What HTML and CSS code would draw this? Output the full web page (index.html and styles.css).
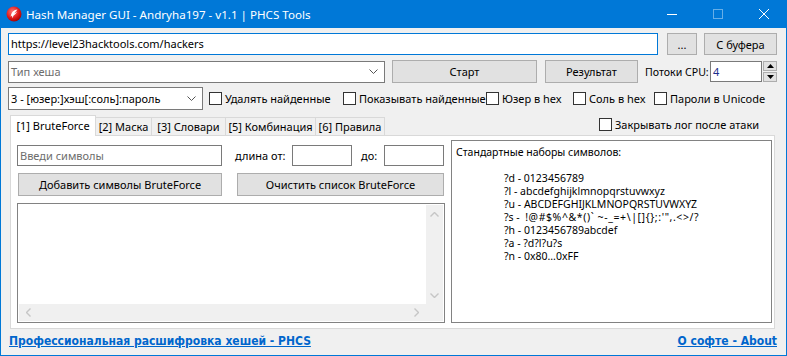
FILE: index.html
```html
<!DOCTYPE html>
<html lang="ru">
<head>
  <meta charset="UTF-8" />
  <title>Hash Manager GUI</title>
  <link rel="stylesheet" href="styles.css">
</head>
<body>
  <div class="window">
    <div class="titlebar">
      <svg class="app-icon" width="16" height="16" viewBox="0 0 16 16">
        <defs>
          <radialGradient id="rg" cx="0.4" cy="0.35" r="0.7">
            <stop offset="0" stop-color="#ff7a7a"/>
            <stop offset="0.6" stop-color="#e01b1b"/>
            <stop offset="1" stop-color="#9c0000"/>
          </radialGradient>
        </defs>
        <circle cx="8" cy="8" r="7.5" fill="url(#rg)"/>
        <path d="M11.5 3.5 C8 3.8 5.2 6.2 4.6 10.8 L6 9.6 L6.4 12.2 L7.6 9.4 C9 8.8 10.6 7.4 11 5.6 C10.2 6.6 9.2 7.2 8.2 7.4 C9.2 6.2 10.4 4.8 11.5 3.5 Z" fill="#fff"/>
      </svg>
      <span class="title">Hash Manager GUI - Andryha197 - v1.1 | PHCS Tools</span>
      <div class="caption-btns">
        <span class="cap"><svg width="10" height="10" viewBox="0 0 10 10"><path d="M0 5.5H10" stroke="#fff" stroke-width="1"/></svg></span>
        <span class="cap"><svg width="10" height="10" viewBox="0 0 10 10"><rect x="0.5" y="0.5" width="9" height="9" fill="none" stroke="rgba(255,255,255,0.4)"/></svg></span>
        <span class="cap"><svg width="10" height="10" viewBox="0 0 10 10"><path d="M0 0L10 10M10 0L0 10" stroke="#fff" stroke-width="1"/></svg></span>
      </div>
    </div>

    <div class="client">
      <div class="row row-url">
        <div class="field url">https://level23hacktools.com/hackers</div>
        <div class="btn btn-dots">...</div>
        <div class="btn btn-clip">С буфера</div>
      </div>

      <div class="row row-start">
        <div class="combo combo-hash">
          <span class="placeholder">Тип хеша</span>
          <svg class="chev" width="9" height="5" viewBox="0 0 9 5"><path d="M0.5 0.5L4.5 4.5L8.5 0.5" fill="none" stroke="#555"/></svg>
        </div>
        <div class="btn btn-start">Старт</div>
        <div class="btn btn-result">Результат</div>
        <span class="cpu-label">Потоки CPU:</span>
        <div class="field cpu">4</div>
        <div class="spin">
          <span class="spin-btn"><svg width="7" height="4" viewBox="0 0 7 4"><path d="M0 4L3.5 0L7 4Z" fill="#000"/></svg></span>
          <span class="spin-btn"><svg width="7" height="4" viewBox="0 0 7 4"><path d="M0 0L3.5 4L7 0Z" fill="#000"/></svg></span>
        </div>
      </div>

      <div class="row row-opts">
        <div class="combo combo-format">
          <span>3 - [юзер:]хэш[:соль]:пароль</span>
          <svg class="chev" width="9" height="5" viewBox="0 0 9 5"><path d="M0.5 0.5L4.5 4.5L8.5 0.5" fill="none" stroke="#555"/></svg>
        </div>
        <label class="check w1"><span class="box"></span>Удалять найденные</label>
        <label class="check w2"><span class="box"></span>Показывать найденные</label>
        <label class="check w3"><span class="box"></span>Юзер в hex</label>
        <label class="check w4"><span class="box"></span>Соль в hex</label>
        <label class="check"><span class="box"></span>Пароли в Unicode</label>
      </div>

      <div class="row row-tabs">
        <div class="tabs">
          <span class="tab active t1">[1] BruteForce</span>
          <span class="tab t2">[2] Маска</span>
          <span class="tab t3">[3] Словари</span>
          <span class="tab t4">[5] Комбинация</span>
          <span class="tab t5">[6] Правила</span>
        </div>
        <label class="check close-log"><span class="box"></span>Закрывать лог после атаки</label>
      </div>

      <div class="tab-page">
        <div class="brute">
          <div class="brute-row">
            <div class="field chars"><span class="placeholder">Введи символы</span></div>
            <span class="len-label">длина от:</span>
            <div class="field len"></div>
            <span class="to-label">до:</span>
            <div class="field len"></div>
          </div>
          <div class="brute-row buttons">
            <div class="btn btn-add">Добавить символы BruteForce</div>
            <div class="btn btn-clear">Очистить список BruteForce</div>
          </div>
          <div class="log">
            <div class="log-text"></div>
            <div class="vscroll">
              <svg width="9" height="5" viewBox="0 0 9 5"><path d="M0.5 4.5L4.5 0.5L8.5 4.5" fill="none" stroke="#c6c6c6" stroke-width="1.4"/></svg>
              <svg width="9" height="5" viewBox="0 0 9 5"><path d="M0.5 0.5L4.5 4.5L8.5 0.5" fill="none" stroke="#c6c6c6" stroke-width="1.4"/></svg>
            </div>
            <div class="hscroll">
              <svg width="5" height="9" viewBox="0 0 5 9"><path d="M4.5 0.5L0.5 4.5L4.5 8.5" fill="none" stroke="#c6c6c6" stroke-width="1.4"/></svg>
              <svg width="5" height="9" viewBox="0 0 5 9"><path d="M0.5 0.5L4.5 4.5L0.5 8.5" fill="none" stroke="#c6c6c6" stroke-width="1.4"/></svg>
            </div>
            <div class="corner"></div>
          </div>
        </div>

        <div class="charsets">
          <p>Стандартные наборы символов:</p>
          <ul>
            <li>?d - 0123456789</li>
            <li>?l - abcdefghijklmnopqrstuvwxyz</li>
            <li>?u - ABCDEFGHIJKLMNOPQRSTUVWXYZ</li>
            <li>?s - &nbsp;<span class="sym">!@#$%^&amp;*()` ~-_=+\|[]{};:'",.&lt;&gt;/?</span></li>
            <li>?h - 0123456789abcdef</li>
            <li>?a - ?d?l?u?s</li>
            <li>?n - 0x80...0xFF</li>
          </ul>
        </div>
      </div>

      <div class="row row-links">
        <a href="#">Профессиональная расшифровка хешей - PHCS</a>
        <a href="#">О софте - About</a>
      </div>
    </div>
  </div>
</body>
</html>
```

FILE: styles.css
```css
* { box-sizing:border-box; margin:0; padding:0; }
html, body { width:787px; height:356px; overflow:hidden; }
body { font-family:"Noto Sans", "Segoe UI", sans-serif; font-size:11px; color:#000; background:#fff; }

.window { width:787px; height:356px; display:flex; flex-direction:column; background:#f0f0f0; }

/* —— title bar —— */
.titlebar { height:28px; background:#0078d7; color:#fff; display:flex; align-items:center; }
.app-icon { margin-left:6px; flex:none; }
.title { margin-left:4px; font-size:11.6px; white-space:nowrap; }
.caption-btns { margin-left:auto; display:flex; height:100%; }
.cap { width:46px; height:100%; display:flex; align-items:center; justify-content:center; }

/* —— client area —— */
.client { flex:1; border:1px solid #0078d7; border-top:none; padding:0 9px 0 7px; display:flex; flex-direction:column; }
.row { display:flex; align-items:center; flex:none; }

.field { background:#fff; border:1px solid #7a7a7a; height:21px; line-height:19px; padding-left:2px; white-space:nowrap; overflow:hidden; }
.placeholder { color:#6d6d6d; }
.btn { background:#e1e1e1; border:1px solid #adadad; height:23px; display:flex; align-items:center; justify-content:center; white-space:nowrap; flex:none; }
.combo { background:#fff; border:1px solid #7a7a7a; display:flex; align-items:center; padding:0 6px 0 2px; white-space:nowrap; flex:none; }
.combo .chev { margin-left:auto; }

.row-url { margin-top:5px; height:22px; }
.url { width:650px; height:22px; line-height:20px; border-color:#0078d7; }
.btn-dots { width:30px; height:22px; margin-left:9px; }
.btn-clip { width:73px; height:22px; margin-left:7px; }

.row-start { margin-top:5px; height:23px; }
.combo-hash { width:377px; height:22px; }
.btn-start { width:145px; margin-left:7px; }
.btn-result { width:93px; margin-left:8px; }
.cpu-label { width:65px; margin-left:7px; white-space:nowrap; font-size:10.6px; }
.cpu { width:52px; color:#1c2e8c; }
.spin { width:14px; height:21px; margin-left:1px; display:flex; flex-direction:column; gap:1px; }
.spin-btn { flex:1; background:#e1e1e1; border:1px solid #adadad; display:flex; align-items:center; justify-content:center; }

.row-opts { margin-top:4px; height:23px; }
.combo-format { width:195px; height:23px; }
.check { display:flex; align-items:center; white-space:nowrap; flex:none; }
.check .box { width:13px; height:13px; border:1px solid #333; background:#fff; margin-right:3px; flex:none; }
.row-opts .w1 { margin-left:6px; width:134px; }
.row-opts .w2 { width:143px; }
.row-opts .w3 { width:87px; }
.row-opts .w4 { width:81px; }

/* —— tabs —— */
.row-tabs { margin-top:5px; height:20px; align-items:flex-end; }
.tabs { display:flex; align-items:flex-end; margin-left:2px; }
.tab { height:18px; background:#f0f0f0; border:1px solid #d9d9d9; border-bottom:none; display:flex; align-items:center; justify-content:center; white-space:nowrap; }
.tab + .tab { border-left:none; }
.tab.active { height:21px; background:#fff; margin-bottom:-1px; position:relative; z-index:1; padding-bottom:2px; }
.t1 { width:86px; }
.t2 { width:56px; }
.t3 { width:74px; }
.t4 { width:90px; }
.t5 { width:69px; }
.close-log { align-self:flex-start; margin-top:2px; margin-left:214px; }

.tab-page { margin-left:2px; width:765px; height:194px; background:#fff; border:1px solid #d9d9d9; display:flex; padding:4px 1px 0 6px; flex:none; }

.brute { width:428px; margin-top:5px; display:flex; flex-direction:column; }
.brute-row { display:flex; align-items:center; }
.chars { width:205px; }
.len-label { margin-left:13px; width:57px; white-space:nowrap; }
.len { width:60px; }
.to-label { margin-left:9px; width:23px; }
.buttons { margin-top:7px; }
.btn-add { width:204px; margin-left:1px; }
.btn-clear { width:207px; margin-left:15px; }

.log { margin-top:7px; width:428px; height:120px; border:1px solid #828282; padding:1px; display:grid; grid-template-columns:1fr 17px; grid-template-rows:1fr 17px; }
.vscroll { background:#f0f0f0; display:flex; flex-direction:column; align-items:center; justify-content:space-between; padding:7px 0 6px; }
.hscroll { background:#f0f0f0; display:flex; align-items:center; justify-content:space-between; padding:0 7px 0 7px; }
.corner { background:#f0f0f0; }

.charsets { margin-left:6px; width:321px; height:183px; border:1px solid #828282; padding:5px 4px; font-size:10.5px; line-height:13px; white-space:nowrap; }
.charsets ul { list-style:none; margin-top:13px; padding-left:48px; }
.charsets .sym { letter-spacing:0.6px; }

/* —— links —— */
.row-links { margin-top:4px; height:16px; justify-content:space-between; padding-left:1px; }
.row-links a { color:#0066cc; font-family:"DejaVu Sans Condensed", "DejaVu Sans", sans-serif; font-weight:bold; font-size:12px; text-decoration:underline; }
```
